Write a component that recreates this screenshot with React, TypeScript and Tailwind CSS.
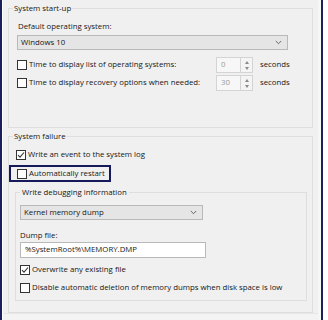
import React from "react";

const font = { fontFamily: '"Open Sans", "Noto Sans", sans-serif' };

function CheckBox({ checked = false }: { checked?: boolean }) {
    return (
        <span className="w-[10px] h-[10px] shrink-0 bg-white border border-[#333] flex items-center justify-center">
            {checked && (
                <svg width="8" height="8" viewBox="0 0 8 8">
                    <path d="M1 4.2 L3 6.2 L7 1.5" fill="none" stroke="#333" strokeWidth="1.1" />
                </svg>
            )}
        </span>
    );
}

function Chevron() {
    return (
        <svg width="7" height="5" viewBox="0 0 7 5" className="shrink-0">
            <path d="M0.8 1 L3.5 3.7 L6.2 1" fill="none" stroke="#666" strokeWidth="1" />
        </svg>
    );
}

function Spinner({ value }: { value: string }) {
    return (
        <div className="flex h-[16px]">
            <div className="w-[25px] h-full bg-[#f7f7f7] border border-[#d4d4d4] text-[#9a9a9a] pl-[4px] flex items-center">
                {value}
            </div>
            <div className="w-[12px] h-full border border-l-0 border-[#d4d4d4] bg-[#f4f4f4] flex flex-col items-center justify-center gap-[3px]">
                <svg width="4" height="3" viewBox="0 0 4 3"><path d="M0 3 L2 0 L4 3Z" fill="#8a8a8a" /></svg>
                <svg width="4" height="3" viewBox="0 0 4 3"><path d="M0 0 L2 3 L4 0Z" fill="#8a8a8a" /></svg>
            </div>
        </div>
    );
}

export default function App() {
    return (
        <div className="w-[328px] h-[320px] bg-white flex text-[7.8px] text-[#161616] leading-none" style={font}>
            <div className="w-[2px] bg-[#1b1f5c]" />
            <div className="w-[1px] bg-white" />

            {/* Panel */}
            <div className="flex-1 bg-[#f0f0f0] flex flex-col">
                {/* System start-up */}
                <div className="mt-[8px] mx-[5px] border border-[#dedede] pb-[36px]">
                    <div className="-mt-[6px] h-[12px] ml-[4px] px-[1px] w-fit bg-[#f0f0f0] flex items-center">System start-up</div>
                    <div className="mt-[6px] h-[12px] ml-[9px] flex items-center">Default operating system:</div>
                    <div className="mt-[2px] ml-[8px] w-[271px] h-[15px] bg-[#e5e5e5] border border-[#b9b9b9] flex items-center justify-between pl-[3px] pr-[5px]">
                        <span>Windows 10</span>
                        <Chevron />
                    </div>
                    <div className="mt-[7px] ml-[8px] h-[16px] flex items-center">
                        <div className="w-[199px] flex items-center gap-[2px]">
                            <CheckBox />
                            <span>Time to display list of operating systems:</span>
                        </div>
                        <Spinner value="0" />
                        <span className="ml-[7px]">seconds</span>
                    </div>
                    <div className="mt-[2px] ml-[8px] h-[16px] flex items-center">
                        <div className="w-[199px] flex items-center gap-[2px]">
                            <CheckBox />
                            <span>Time to display recovery options when needed:</span>
                        </div>
                        <Spinner value="30" />
                        <span className="ml-[7px]">seconds</span>
                    </div>
                </div>

                {/* System failure */}
                <div className="mt-[8px] mx-[5px] border border-[#dedede] pb-[11px]">
                    <div className="-mt-[6px] h-[12px] ml-[4px] px-[1px] w-fit bg-[#f0f0f0] flex items-center">System failure</div>
                    <div className="mt-[5px] ml-[7px] h-[14px] flex items-center gap-[2px]">
                        <CheckBox checked />
                        <span>Write an event to the system log</span>
                    </div>
                    <div className="mt-[3px] w-[102px] h-[17px] border-2 border-[#141a5a] pl-[6px] flex items-center gap-[2px]">
                        <CheckBox />
                        <span>Automatically restart</span>
                    </div>

                    {/* Write debugging information */}
                    <div className="mt-[10px] ml-[6px] mr-[5px] border border-[#dedede] pb-[5px]">
                        <div className="-mt-[6px] h-[12px] ml-[4px] px-[2px] w-fit bg-[#f0f0f0] flex items-center">Write debugging information</div>
                        <div className="mt-[6px] ml-[4px] w-[183px] h-[15px] bg-[#e5e5e5] border border-[#b9b9b9] flex items-center justify-between pl-[3px] pr-[5px]">
                            <span>Kernel memory dump</span>
                            <Chevron />
                        </div>
                        <div className="mt-[10px] ml-[4px] h-[12px] flex items-center">Dump file:</div>
                        <div className="ml-[4px] w-[186px] h-[16px] bg-white border border-[#b9b9b9] pl-[4px] flex items-center">
                            %SystemRoot%\MEMORY.DMP
                        </div>
                        <div className="mt-[5px] ml-[4px] h-[14px] flex items-center gap-[2px]">
                            <CheckBox checked />
                            <span>Overwrite any existing file</span>
                        </div>
                        <div className="mt-[4px] ml-[4px] h-[14px] flex items-center gap-[2px]">
                            <CheckBox />
                            <span>Disable automatic deletion of memory dumps when disk space is low</span>
                        </div>
                    </div>
                </div>
                <div className="flex-1 border-t border-[#e6e6e6] bg-[#f3f3f3]" />
            </div>

            <div className="w-[3px] bg-[#f6f6f6]" />
            <div className="w-[2px] bg-[#1b1f5c]" />
            <div className="w-[5px] bg-white" />
        </div>
    );
}
